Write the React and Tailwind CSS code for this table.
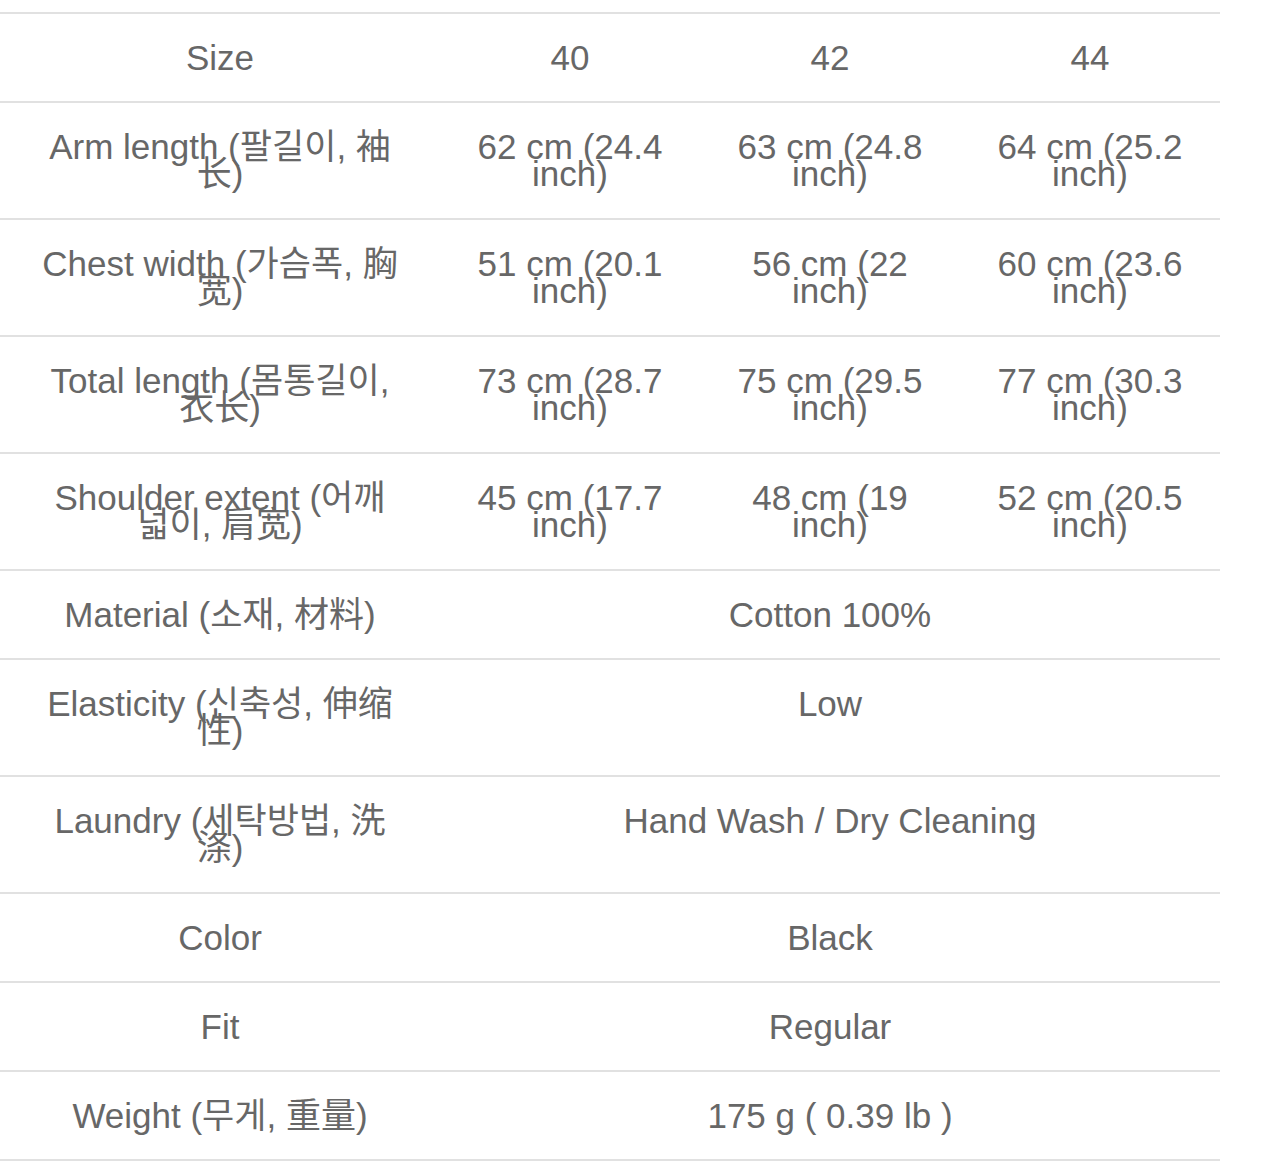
import React from 'react'

const sizeRows = [
  { label: ['Arm length (팔길이, 袖', '长)'], values: [['62 cm (24.4', 'inch)'], ['63 cm (24.8', 'inch)'], ['64 cm (25.2', 'inch)']] },
  { label: ['Chest width (가슴폭, 胸', '宽)'], values: [['51 cm (20.1', 'inch)'], ['56 cm (22', 'inch)'], ['60 cm (23.6', 'inch)']] },
  { label: ['Total length (몸통길이,', '衣长)'], values: [['73 cm (28.7', 'inch)'], ['75 cm (29.5', 'inch)'], ['77 cm (30.3', 'inch)']] },
  { label: ['Shoulder extent (어깨', '넓이, 肩宽)'], values: [['45 cm (17.7', 'inch)'], ['48 cm (19', 'inch)'], ['52 cm (20.5', 'inch)']] },
]

const infoRows = [
  { label: ['Material (소재, 材料)'], value: ['Cotton 100%'] },
  { label: ['Elasticity (신축성, 伸缩', '性)'], value: ['Low'] },
  { label: ['Laundry (세탁방법, 洗', '涤)'], value: ['Hand Wash / Dry Cleaning'] },
  { label: ['Color'], value: ['Black'] },
  { label: ['Fit'], value: ['Regular'] },
  { label: ['Weight (무게, 重量)'], value: ['175 g ( 0.39 lb )'] },
]

// each line is its own block so the wrapping matches the picture
function Lines({ lines }) {
  return lines.map((line, i) => (
    <span key={i} className="block whitespace-nowrap">{line}</span>
  ))
}

function rowHeight(lines) {
  return lines.length > 1 ? 'h-[117px]' : 'h-[89px]'
}

const cell = 'pt-[30px] text-center align-top'

export default function App() {
  return (
    <div className="min-h-screen bg-white pt-[12px] font-['Liberation_Sans','Noto_Sans_CJK_KR','Noto_Sans_CJK_SC',sans-serif] text-[35px] leading-[27px] text-[#676767]">
      <table className="w-[1220px] table-fixed border-collapse border-t-[2px] border-[#e1e1e1]">
        <colgroup>
          <col className="w-[440px]" />
          <col className="w-[260px]" />
          <col className="w-[260px]" />
          <col className="w-[260px]" />
        </colgroup>
        <tbody>
          <tr className="h-[89px] border-b-[2px] border-[#e1e1e1]">
            <td className={cell}>Size</td>
            <td className={cell}>40</td>
            <td className={cell}>42</td>
            <td className={cell}>44</td>
          </tr>
          {sizeRows.map((row) => (
            <tr key={row.label[0]} className={`${rowHeight(row.label)} border-b-[2px] border-[#e1e1e1]`}>
              <td className={cell}><Lines lines={row.label} /></td>
              {row.values.map((v, i) => (
                <td key={i} className={cell}><Lines lines={v} /></td>
              ))}
            </tr>
          ))}
          {infoRows.map((row) => (
            <tr key={row.label[0]} className={`${rowHeight(row.label)} border-b-[2px] border-[#e1e1e1]`}>
              <td className={cell}><Lines lines={row.label} /></td>
              <td colSpan={3} className={cell}><Lines lines={row.value} /></td>
            </tr>
          ))}
        </tbody>
      </table>
    </div>
  )
}
